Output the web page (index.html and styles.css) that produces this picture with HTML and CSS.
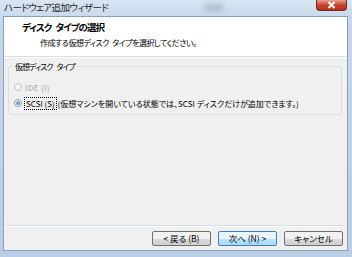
FILE: index.html
```html
<!DOCTYPE html>
<html lang="ja">
<head>
    <meta charset="UTF-8">
    <title>ハードウェア追加ウィザード</title>
    <link rel="stylesheet" href="styles.css">
</head>
<body>
    <div class="window">
        <div class="titlebar">
            <span class="title">ハードウェア追加ウィザード</span>
            <span class="blur"></span>
            <span class="close">
                <svg width="11" height="8" viewBox="0 0 11 8"><path d="M2.5 1 L8.5 7 M8.5 1 L2.5 7" stroke="#fff" stroke-width="2"/></svg>
            </span>
        </div>
        <div class="client">
            <div class="header">
                <h3>ディスク タイプの選択</h3>
                <p>作成する仮想ディスク タイプを選択してください。</p>
            </div>
            <div class="body">
                <fieldset class="group">
                    <legend>仮想ディスク タイプ</legend>
                    <label class="radio disabled"><span class="dot"></span>IDE (I)</label>
                    <label class="radio"><span class="dot checked"></span><span class="focus">SCSI (S)</span>&nbsp;(仮想マシンを開いている状態では、SCSI ディスクだけが追加できます。)</label>
                </fieldset>
            </div>
            <div class="footer">
                <button>&lt; 戻る (B)</button>
                <button class="default">次へ (N) &gt;</button>
                <button>キャンセル</button>
            </div>
        </div>
    </div>
</body>
</html>
```

FILE: styles.css
```css
body {
    margin: 0;
    width: 352px;
    height: 257px;
    overflow: hidden;
    font-family: "Noto Sans CJK JP", "Liberation Sans", sans-serif;
    font-feature-settings: "palt";
    font-size: 8px;
    color: #000;
}
.window {
    height: 257px;
    background: linear-gradient(#d9e5f2, #c6d7ea 20px, #b9cde6);
    padding: 0 4px 6px 3px;
    box-sizing: border-box;
    display: flex;
    flex-direction: column;
}
.titlebar {
    height: 16px;
    flex: none;
    position: relative;
}
.title {
    display: block;
    font-size: 9.5px;
    letter-spacing: -0.6px;
    line-height: 14px;
    padding: 0 0 0 1px;
    color: #1e1e1e;
}
.blur {
    position: absolute;
    left: 202px;
    top: 4px;
    width: 18px;
    height: 7px;
    background: #8d9fb5;
    filter: blur(3px);
    opacity: 0.6;
}
.close {
    position: absolute;
    right: 1px;
    top: 0;
    width: 29px;
    height: 10px;
    background: linear-gradient(#e8a090, #c8452c 50%, #b83017);
    border: 1px solid #6e2a22;
    border-top: none;
    border-radius: 0 0 4px 4px;
    display: flex;
    justify-content: center;
    align-items: center;
}
.client {
    flex: 1;
    display: flex;
    flex-direction: column;
    background: #f0f0f0;
    border: 1px solid #8fa0b4;
}
.header {
    background: #fff;
    height: 40px;
    flex: none;
    border-bottom: 1px solid #d5dfe5;
    box-shadow: 0 1px 0 #fff;
    box-sizing: border-box;
    padding: 4px 0 0 18px;
}
.header h3 {
    margin: 0;
    font-size: 9.5px;
    letter-spacing: -1px;
    word-spacing: 3px;
    line-height: 13px;
    font-weight: bold;
}
.header p {
    margin: 2px 0 0 18px;
    letter-spacing: -0.5px;
    word-spacing: 2px;
    line-height: 13px;
}
.body {
    flex: 1;
    padding: 4px 5px 0 4px;
}
.group {
    margin: 0;
    border: 1px solid #d5dfe5;
    border-radius: 3px;
    padding: 2px 4px 6px 5px;
    height: 44px;
}
.group legend {
    padding: 0 2px;
    margin-left: -1px;
    letter-spacing: -1px;
    word-spacing: 3px;
}
.radio {
    display: flex;
    align-items: center;
    height: 16px;
    white-space: nowrap;
}
.radio.disabled {
    color: #a3a3a3;
    margin-top: 5px;
    letter-spacing: 0.4px;
}
.dot {
    width: 6px;
    height: 6px;
    border: 1px solid #b8bfc6;
    border-radius: 50%;
    background: #f4f4f4;
    margin-right: 3px;
    display: inline-flex;
    align-items: center;
    justify-content: center;
}
.radio .dot.checked {
    border-color: #8a99a8;
    background: #fff;
}
.dot.checked::after {
    content: "";
    width: 4px;
    height: 4px;
    border-radius: 50%;
    background: radial-gradient(circle at 40% 35%, #8fc7f0, #1f5f9e);
}
.focus {
    outline: 1px dotted #000;
    padding: 0 1px;
}
.footer {
    flex: none;
    border-top: 1px solid #d5dfe5;
    box-shadow: inset 0 1px 0 #fff;
    height: 24px;
    display: flex;
    justify-content: flex-end;
    align-items: center;
    gap: 7px;
    padding-right: 4px;
}
button {
    font-family: inherit;
    font-feature-settings: "palt";
    font-size: 8.5px;
    width: 59px;
    height: 15px;
    padding: 0;
    border: 1px solid #707070;
    border-radius: 2px;
    background: linear-gradient(#f2f2f2 50%, #dcdcdc 50%, #cfcfcf);
    color: #000;
}
button.default {
    border-color: #3c7fb1;
    background: linear-gradient(#eaf6fd 50%, #bee6fd 50%, #a7d9f5);
}
```
